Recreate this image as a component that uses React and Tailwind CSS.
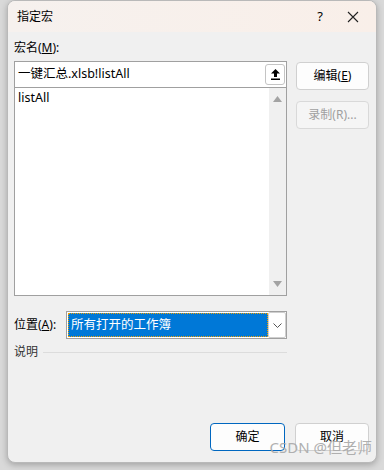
import React from 'react';

const font = { fontFamily: '"Noto Sans", "Noto Sans CJK SC", sans-serif' };

function Tri({ up }) {
    return (
        <svg width="9" height="6" viewBox="0 0 9 6">
            {up ? <polygon points="4.5,0 9,6 0,6" fill="#a3a3a3" /> : <polygon points="0,0 9,0 4.5,6" fill="#a3a3a3" />}
        </svg>
    );
}

export default function App() {
    return (
        <div className="w-[384px] h-[470px] bg-[#d9d9d9] overflow-hidden text-[12px] text-black" style={font}>
            <div className="ml-[7px] w-[370px] h-[463px] bg-[#f0f0f0] border border-[#b9b9b9] rounded-[8px] flex flex-col overflow-hidden shadow-[0_2px_6px_rgba(0,0,0,0.25)]">
                {/* Title bar */}
                <div className="h-[31px] bg-gradient-to-r from-[#f6f1ee] to-[#f9efe9] flex items-center pl-[9px]">
                    <span className="flex-1 text-[12px]">指定宏</span>
                    <span className="w-[20px] text-center text-[13px]">?</span>
                    <span className="w-[46px] flex justify-center">
                        <svg width="12" height="12" viewBox="0 0 12 12">
                            <path d="M1 1L11 11M11 1L1 11" stroke="#222" strokeWidth="1.1" />
                        </svg>
                    </span>
                </div>

                {/* Body */}
                <div className="flex-1 flex px-[6px] pt-[8px]">
                    <div className="w-[273px] flex flex-col">
                        <div className="h-[21px] leading-[16px]">宏名(<span className="underline">M</span>):</div>
                        <div className="h-[27px] bg-white border border-[#a0a0a0] flex items-center pl-[3px] pr-[1px]">
                            <span className="flex-1 text-[12.5px]">一键汇总.xlsb!listAll</span>
                            <div className="w-[20px] h-[21px] border border-[#c4c4c4] rounded-[3px] flex items-center justify-center bg-white">
                                <svg width="9" height="11" viewBox="0 0 9 11">
                                    <polygon points="4.5,0 9,4.5 6,4.5 6,8 3,8 3,4.5 0,4.5" fill="#000" />
                                    <rect x="0" y="9.5" width="9" height="1.5" fill="#000" />
                                </svg>
                            </div>
                        </div>
                        <div className="h-[208px] bg-white border border-[#a0a0a0] border-t-0 flex">
                            <div className="flex-1 pl-[3px] pt-[2px] text-[12.5px] leading-[16px]">listAll</div>
                            <div className="w-[17px] bg-[#f0f0f0] flex flex-col items-center justify-between py-[8px]">
                                <Tri up />
                                <Tri />
                            </div>
                        </div>
                        <div className="h-[15px]" />
                        <div className="flex items-center h-[28px]">
                            <span className="w-[52px]">位置(<span className="underline">A</span>):</span>
                            <div className="flex-1 h-[28px] border border-[#a0a0a0] bg-white flex p-[1px]">
                                <div className="flex-1 bg-[#0078d7] text-white border border-dotted border-[#f0a000] flex items-center pl-[2px] text-[12.5px]">所有打开的工作簿</div>
                                <div className="w-[18px] flex items-center justify-center border border-[#cfcfcf] rounded-[2px] -my-[1px] -mr-[1px]">
                                    <svg width="9" height="5" viewBox="0 0 9 5">
                                        <path d="M0.5 0.5L4.5 4.5L8.5 0.5" stroke="#555" fill="none" />
                                    </svg>
                                </div>
                            </div>
                        </div>
                        <div className="flex items-center mt-[2px] h-[22px]">
                            <span className="text-[#333]">说明</span>
                            <div className="flex-1 h-px bg-[#dcdcdc] ml-[5px]" />
                        </div>
                    </div>
                    <div className="ml-[9px] w-[73px] flex flex-col gap-[11px] pt-[22px]">
                        <div className="h-[28px] bg-[#fdfdfd] border border-[#d0d0d0] rounded-[4px] flex items-center justify-center">编辑(<span className="underline">E</span>)</div>
                        <div className="h-[28px] bg-[#f5f5f5] border border-[#d9d9d9] rounded-[4px] flex items-center justify-center text-[#a0a0a0]">录制(R)...</div>
                    </div>
                </div>

                {/* Footer */}
                <div className="h-[39px] flex items-start justify-end gap-[10px] pr-[7px] relative">
                    <div className="w-[75px] h-[28px] bg-[#fdfdfd] border border-[#0067c0] rounded-[4px] flex items-center justify-center">确定</div>
                    <div className="w-[74px] h-[28px] bg-[#fdfdfd] border border-[#d0d0d0] rounded-[4px] flex items-center justify-center">取消</div>
                    <span className="absolute right-[4px] top-[13px] text-[15px] text-[#a8a8a8] opacity-90">CSDN @但老师</span>
                </div>
            </div>
        </div>
    );
}
